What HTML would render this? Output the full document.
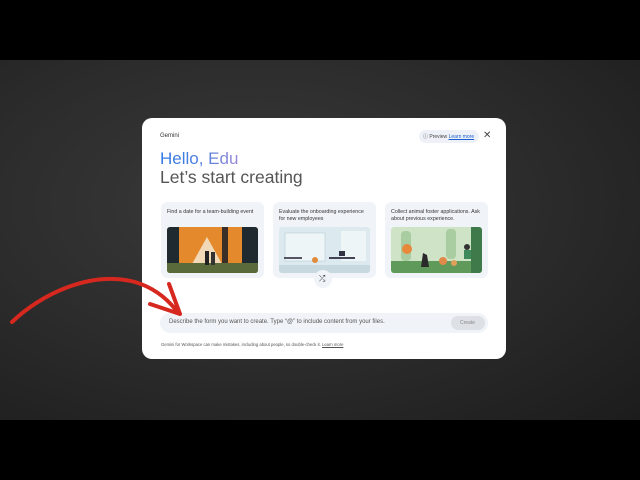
<!DOCTYPE html>
<html><head><meta charset="utf-8"><style>
*{margin:0;padding:0;box-sizing:border-box}
body{width:640px;height:480px;overflow:hidden;background:#000;font-family:"Liberation Sans",sans-serif;position:relative}
.bg{position:absolute;left:0;top:60px;width:640px;height:360px;background:radial-gradient(ellipse at 40% 40%,#3a3a3a 0%,#2c2c2c 50%,#1c1c1c 100%)}
.dlg{position:absolute;left:142px;top:118px;width:364px;height:241px;background:#fff;border-radius:10px}
.t{position:absolute;white-space:nowrap}
.card{position:absolute;top:84px;width:103px;height:76px;background:#f0f4f9;border-radius:6px}
.card .c{position:absolute;left:6px;top:7px;font-size:5.3px;color:#333;line-height:7px;width:95px}
.card svg{position:absolute;left:6px;top:25px;width:91px;height:46px;border-radius:3px}
</style></head><body>
<div class="bg"></div>
<div class="dlg">
 <div class="t" style="left:18px;top:15px;font-size:6px;color:#333">Gemini</div>
 <div style="position:absolute;left:277px;top:12px;width:60px;height:13px;background:#eef2f8;border-radius:7px"></div>
 <div class="t" style="left:281px;top:15px;font-size:5px;color:#444">ⓘ Preview <span style="color:#1a5fd0;text-decoration:underline">Learn more</span></div>
 <div class="t" style="left:341px;top:12px;font-size:10px;color:#444">✕</div>
 <div class="t" style="left:18px;top:31px;font-size:17px;background:linear-gradient(90deg,#2f78e4 0%,#4a7fe0 50%,#9a8ad6 100%);-webkit-background-clip:text;color:transparent">Hello, Edu</div>
 <div class="t" style="left:18px;top:49px;font-size:17.5px;color:#555">Let’s start creating</div>
 <div class="card" style="left:19px"><div class="c">Find a date for a team-building event</div>
  <svg viewBox="0 0 91 46"><rect width="91" height="46" fill="#e58a2c"/><polygon points="20,46 40,10 60,46" fill="#f1d9b8"/><rect x="0" width="12" height="46" fill="#1f2a30"/><rect x="75" width="16" height="46" fill="#1f2a30"/><rect x="55" y="0" width="6" height="46" fill="#3a2f28"/><rect x="0" y="36" width="91" height="10" fill="#5a6a3a"/><rect x="38" y="24" width="4" height="14" fill="#222"/><rect x="44" y="25" width="4" height="13" fill="#333"/></svg></div>
 <div class="card" style="left:131px"><div class="c" style="width:88px">Evaluate the onboarding experience for new employees</div>
  <svg viewBox="0 0 91 46"><rect width="91" height="46" fill="#dce9ee"/><rect x="6" y="6" width="40" height="28" fill="#eef5f7" stroke="#b8cdd5" stroke-width=".6"/><rect x="62" y="4" width="25" height="30" fill="#eef5f7"/><rect x="0" y="38" width="91" height="8" fill="#c7d8de"/><rect x="5" y="30" width="18" height="2" fill="#556"/><rect x="50" y="30" width="26" height="2" fill="#445"/><rect x="60" y="24" width="6" height="5" fill="#334"/><circle cx="36" cy="33" r="3" fill="#e08a3a"/></svg></div>
 <div class="card" style="left:243px"><div class="c">Collect animal foster applications. Ask about previous experience.</div>
  <svg viewBox="0 0 91 46"><rect width="91" height="46" fill="#cfe3c6"/><rect x="10" y="4" width="10" height="30" rx="4" fill="#a9cca0"/><rect x="55" y="2" width="10" height="30" rx="4" fill="#a9cca0"/><circle cx="16" cy="22" r="5" fill="#e8883a"/><rect x="0" y="34" width="91" height="12" fill="#5f9a5a"/><path d="M30 40 l2 -14 l4 2 l2 12z" fill="#2a2a2a"/><circle cx="52" cy="34" r="4" fill="#e08a4a"/><circle cx="63" cy="36" r="3" fill="#e0a05a"/><circle cx="76" cy="20" r="3" fill="#333"/><rect x="73" y="23" width="7" height="9" fill="#3f8a5a"/><rect x="80" y="0" width="11" height="46" fill="#3f7a4a"/></svg></div>
 <div style="position:absolute;left:172px;top:152px;width:18px;height:18px;border-radius:50%;background:#f0f4f9"></div>
 <div class="t" style="left:177px;top:156px;font-size:8px;color:#333">⤮</div>
 <div style="position:absolute;left:18px;top:195px;width:328px;height:20px;background:#f0f4f9;border-radius:10px"></div>
 <div class="t" style="left:27px;top:201px;font-size:6px;color:#555">Describe the form you want to create. Type “@” to include content from your files.</div>
 <div style="position:absolute;left:309px;top:198px;width:34px;height:14px;background:#dde1e6;border-radius:7px"></div>
 <div class="t" style="left:318px;top:202px;font-size:5px;color:#888">Create</div>
 <div class="t" style="left:19px;top:224px;font-size:4.2px;color:#555">Gemini for Workspace can make mistakes, including about people, so double-check it. <span style="text-decoration:underline">Learn more</span></div>
</div>
<svg style="position:absolute;left:0;top:270px" width="200" height="70" viewBox="0 0 200 70">
 <path d="M12 52 C40 25,90 0,135 12 C155 18,168 30,176 40" fill="none" stroke="#d6281f" stroke-width="4" stroke-linecap="round"/>
 <path d="M169 14 L180 44 L150 34" fill="none" stroke="#d6281f" stroke-width="4" stroke-linecap="round" stroke-linejoin="round"/>
</svg>
</body></html>
